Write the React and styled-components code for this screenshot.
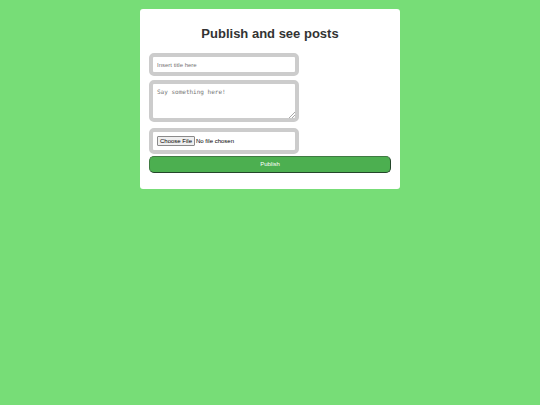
import { useState } from "react";
import styled, { createGlobalStyle, css } from "styled-components";

const GlobalStyle = createGlobalStyle`
  body {
    margin: 0;
    background-color: #77dd77;
    font-family: "Liberation Sans", Arial, sans-serif;
  }
`;

const App = () => {
  const [post, setPost] = useState({ title: "", content: "" });

  const handleChange = (e) => {
    const { name, value } = e.target;
    setPost((prev) => ({ ...prev, [name]: value }));
  };

  const handleSubmit = (e) => {
    e.preventDefault();
    setPost({ title: "", content: "" });
  };

  return (
    <>
      <GlobalStyle />
      <Card>
        <Title>Publish and see posts</Title>
        <Form onSubmit={handleSubmit}>
          <TextInput
            type="text"
            name="title"
            aria-label="Title"
            placeholder="Insert title here"
            value={post.title}
            onChange={handleChange}
          />
          <TextArea
            name="content"
            aria-label="Content"
            placeholder="Say something here!"
            value={post.content}
            onChange={handleChange}
          />
          <FileInput type="file" name="image" aria-label="Image" />
          <PublishButton type="submit">Publish</PublishButton>
        </Form>
      </Card>
    </>
  );
};

const Card = styled.main`
  box-sizing: border-box;
  max-width: 260px;
  margin: 9px auto;
  padding: 17px 9px 16px;
  border-radius: 3px;
  background-color: #fff;
`;

const Title = styled.h1`
  margin: 0 0 11px;
  font-size: 13px;
  line-height: 16px;
  text-align: center;
  color: #333;
`;

const Form = styled.form`
  display: flex;
  flex-direction: column;
  align-items: flex-start;
`;

const field = css`
  box-sizing: border-box;
  width: 62%;
  padding: 4px;
  border: 4px solid #ccc;
  border-radius: 5px;
  background-color: #fff;
  font-size: 6px;

  &::placeholder {
    color: #757575;
  }
`;

const TextInput = styled.input`
  ${field}
  height: 23px;
  margin-bottom: 4px;
  padding: 3px 4px;
  font-family: inherit;
`;

const TextArea = styled.textarea`
  ${field}
  height: 42px;
  margin-bottom: 6px;
  font-family: "DejaVu Sans Mono", monospace;
  resize: both;

  &::-webkit-resizer {
    background: linear-gradient(
        135deg,
        transparent 80%,
        #aaa 80% 83%,
        transparent 83% 90%,
        #aaa 90% 93%,
        transparent 93%
      )
      no-repeat;
  }
`;

const FileInput = styled.input`
  ${field}
  height: 26px;
  margin-bottom: 2px;
  font-family: inherit;
  color: #000;

  &::file-selector-button {
    margin: 0 1px 0 0;
    padding: 0 2px;
    border: 1px solid #8a8a8a;
    border-radius: 1px;
    background-color: #efefef;
    font: inherit;
    line-height: 8px;
    color: #000;
  }
`;

const PublishButton = styled.button`
  width: 100%;
  height: 17px;
  padding: 0 0 1px;
  border: 1px solid;
  border-color: #3f7a42 #24452a #24452a #3f7a42;
  border-radius: 5px;
  background-color: #4caf50;
  font-family: inherit;
  font-size: 6px;
  color: #fff;
  cursor: pointer;
`;

export default App;
